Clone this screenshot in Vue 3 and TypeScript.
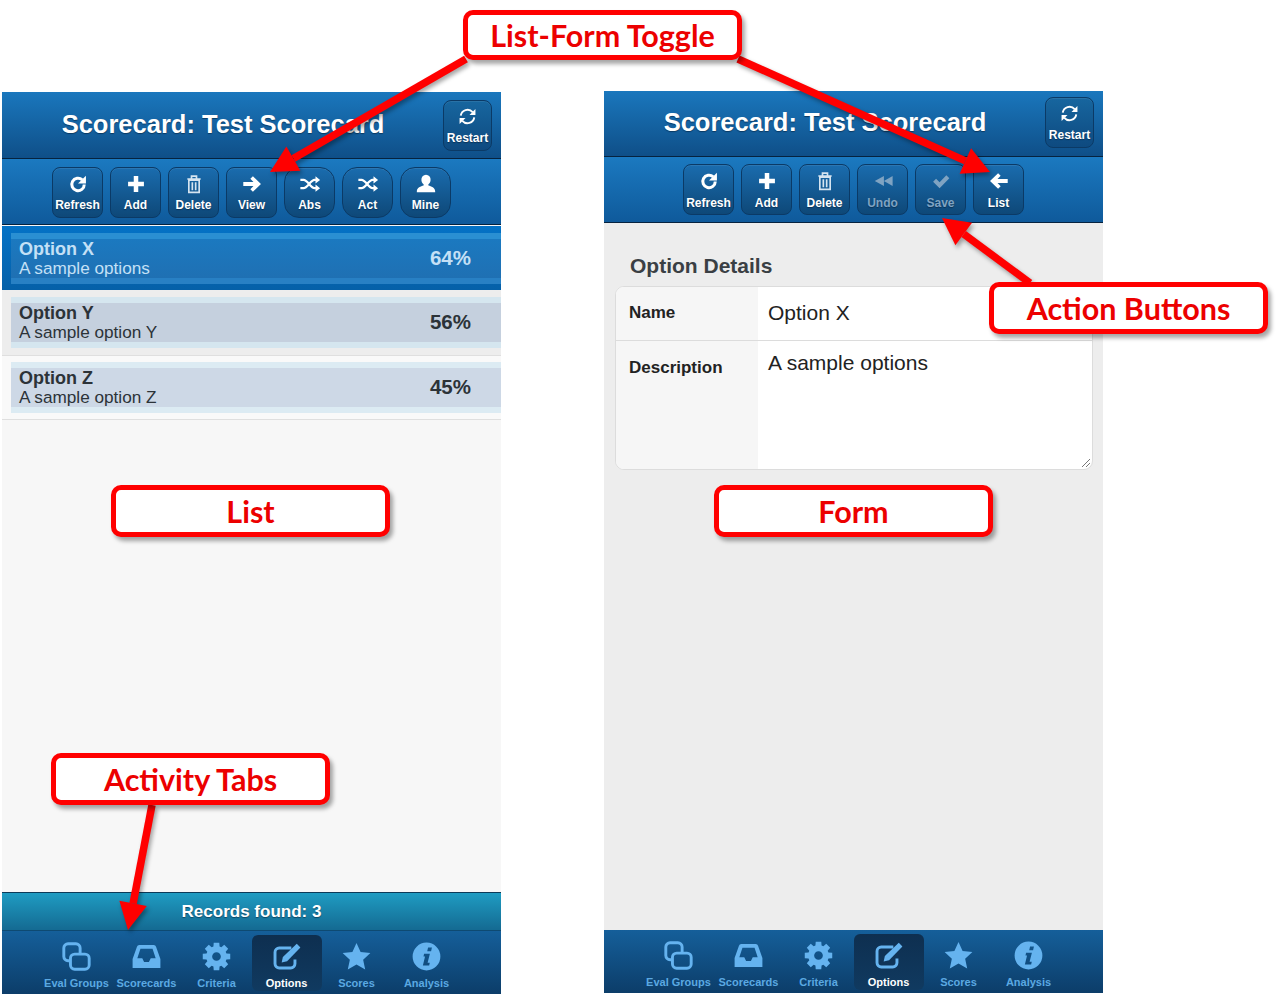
<script setup lang="ts">
interface Shape {
  d: string;
  line?: boolean;
}

interface Btn {
  label: string;
  icon: string;
  round?: boolean;
  off?: boolean;
}

interface Row {
  title: string;
  sub: string;
  score: string;
  kind: string;
}

// 8 tooth cog, easier to generate than to write out by hand
function cogPath(): string {
  const pts: string[] = [];
  for (let i = 0; i < 8; i++) {
    const a = (i * Math.PI) / 4;
    for (const [off, r] of [[-0.3, 8.6], [-0.2, 11.6], [0.2, 11.6], [0.3, 8.6]]) {
      const x = 12 + r * Math.sin(a + off);
      const y = 12 - r * Math.cos(a + off);
      pts.push(x.toFixed(2) + ' ' + y.toFixed(2));
    }
  }
  return 'M' + pts.join('L') + 'zM12 8.4a3.6 3.6 0 1 0 0 7.2a3.6 3.6 0 1 0 0-7.2z';
}

const icons: Record<string, Shape[]> = {
  refresh: [{ d: 'M19.5 12.5a7.5 7.5 0 1 1-2.4-5.5', line: true }, { d: 'M21.5 2v9.5H12z' }],
  restart: [
    { d: 'M3.5 11a8.6 8.6 0 0 1 15-4.5', line: true },
    { d: 'M22 2.5V10h-7.5z' },
    { d: 'M20.5 13a8.6 8.6 0 0 1-15 4.5', line: true },
    { d: 'M2 21.5V14h7.5z' },
  ],
  plus: [{ d: 'M9.3 2.5h5.4v6.8h6.8v5.4h-6.8v6.8H9.3v-6.8H2.5V9.3h6.8z' }],
  trash: [
    { d: 'M5.8 7.5h12.4V22H5.8zM10 10v9.5M14 10v9.5M4 6h16M9 5.5v-3h6v3', line: true },
  ],
  right: [{ d: 'M13 3.5l8.8 8.5-8.8 8.5-2.8-2.8 3.4-3.4H2.5V9.7h11.1l-3.4-3.4z' }],
  left: [{ d: 'M11 3.5L2.2 12l8.8 8.5 2.8-2.8-3.4-3.4h11.1V9.7H10.4l3.4-3.4z' }],
  shuffle: [
    { d: 'M1.5 7.5H5c4.5 0 7.5 9 12 9h1.5M1.5 16.5H5c4.5 0 7.5-9 12-9h1.5', line: true },
    { d: 'M18 3.5l5 4-5 4zM18 12.5l5 4-5 4z' },
  ],
  user: [
    { d: 'M12 2a5 5 0 0 1 5 5.5c0 2-1 3.7-2.4 4.8v1.2c3 1 7.4 2 7.4 6.5v1H2v-1c0-4.5 4.4-5.5 7.4-6.5v-1.2C8 11.2 7 9.5 7 7.5A5 5 0 0 1 12 2z' },
  ],
  undo: [{ d: 'M22.5 6.5v11L13 12zM13 6.5v11L3 12z' }],
  check: [{ d: 'M2.5 13l3.6-3.6 4.2 4.2L18.4 5 22 8.6 10.3 20.8z' }],
  copy: [
    { d: 'M6.5 15.5H5A3.5 3.5 0 0 1 1.5 12V5A3.5 3.5 0 0 1 5 1.5h6.5A3.5 3.5 0 0 1 15 5v4.500', line: true },
    { d: 'M10.5 10H19a3.5 3.5 0 0 1 3.5 3.5V19a3.5 3.5 0 0 1-3.5 3.5h-8.500A3.5 3.5 0 0 1 7 19v-5.500A3.5 3.5 0 0 1 10.500 10z', line: true },
  ],
  inbox: [
    { d: 'M6 2.5h12a2 2 0 0 1 1.9 1.4L23.5 14v7.5H.5V14L4.1 3.9A2 2 0 0 1 6 2.5zM7 5.5L4.4 13.5h4.1l1.5 3h4l1.5-3h4.1L17 5.5z' },
  ],
  cog: [{ d: cogPath() }],
  edit: [
    { d: 'M19 14.5V18a3.5 3.5 0 0 1-3.5 3.5H6A3.5 3.5 0 0 1 2.5 18V8.5A3.5 3.5 0 0 1 6 5h10', line: true },
    { d: 'M20.5 1.5l3 3-11 11.5-4.5 1 1-4.5z' },
  ],
  star: [{ d: 'M12 .8l3.4 7.5 8.1.9-6 5.5 1.7 8L12 18.7l-7.2 4 1.7-8-6-5.5 8.1-.9z' }],
  info: [
    { d: 'M12 .5a11.5 11.5 0 1 0 0 23a11.5 11.5 0 1 0 0-23zM13.3 4.5h3.2l-.7 3.2h-3.2zM10 9.8h4.8l-1.9 7.4h1.8l-.5 2.3H9l1.8-7.4H9.5z' },
  ],
};

const tabs = [
  { label: 'Eval Groups', icon: 'copy' },
  { label: 'Scorecards', icon: 'inbox' },
  { label: 'Criteria', icon: 'cog' },
  { label: 'Options', icon: 'edit', active: true },
  { label: 'Scores', icon: 'star' },
  { label: 'Analysis', icon: 'info' },
];

const listButtons: Btn[] = [
  { label: 'Refresh', icon: 'refresh' },
  { label: 'Add', icon: 'plus' },
  { label: 'Delete', icon: 'trash' },
  { label: 'View', icon: 'right' },
  { label: 'Abs', icon: 'shuffle', round: true },
  { label: 'Act', icon: 'shuffle', round: true },
  { label: 'Mine', icon: 'user', round: true },
];

const formButtons: Btn[] = [
  { label: 'Refresh', icon: 'refresh' },
  { label: 'Add', icon: 'plus' },
  { label: 'Delete', icon: 'trash' },
  { label: 'Undo', icon: 'undo', off: true },
  { label: 'Save', icon: 'check', off: true },
  { label: 'List', icon: 'left' },
];

const phones = [
  { id: 'list', buttons: listButtons },
  { id: 'form', buttons: formButtons },
];

const rows: Row[] = [
  { title: 'Option X', sub: 'A sample options', score: '64%', kind: 'picked' },
  { title: 'Option Y', sub: 'A sample option Y', score: '56%', kind: 'even' },
  { title: 'Option Z', sub: 'A sample option Z', score: '45%', kind: 'odd' },
];

const callouts = [
  { text: 'List-Form Toggle', x: 463, y: 10, h: 50 },
  { text: 'List', x: 111, y: 485, h: 52 },
  { text: 'Form', x: 714, y: 485, h: 52 },
  { text: 'Activity Tabs', x: 51, y: 753, h: 52 },
  { text: 'Action Buttons', x: 989, y: 282, h: 52 },
];

// shaft end + head polygon for an annotation arrow
function arrow(x1: number, y1: number, x2: number, y2: number) {
  const len = Math.hypot(x2 - x1, y2 - y1);
  const ux = (x2 - x1) / len;
  const uy = (y2 - y1) / len;
  const bx = x2 - ux * 27;
  const by = y2 - uy * 27;
  const px = -uy * 14;
  const py = ux * 14;
  return {
    x1,
    y1,
    x2: bx,
    y2: by,
    head: `${x2},${y2} ${bx + px},${by + py} ${bx - px},${by - py}`,
  };
}

const arrows = [
  arrow(466, 59, 270, 172),
  arrow(738, 59, 990, 172),
  arrow(1030, 283, 942, 218),
  arrow(152, 805, 128, 930),
];
</script>

<template>
  <div class="page">
    <section v-for="p in phones" :key="p.id" class="phone" :class="p.id">
      <header class="title-bar">
        <h1>Scorecard: Test Scorecard</h1>
        <button class="btn restart">
          <svg class="icon" viewBox="0 0 24 24">
            <path v-for="(s, i) in icons.restart" :key="i" :d="s.d" :class="s.line ? 'line' : 'solid'" />
          </svg>
          <span>Restart</span>
        </button>
      </header>
      <nav class="toolbar">
        <button v-for="b in p.buttons" :key="b.label" class="btn" :class="{ round: b.round, off: b.off }">
          <svg class="icon" :class="b.icon" viewBox="0 0 24 24">
            <path v-for="(s, i) in icons[b.icon]" :key="i" :d="s.d" :class="s.line ? 'line' : 'solid'" />
          </svg>
          <span>{{ b.label }}</span>
        </button>
      </nav>

      <main v-if="p.id === 'list'" class="content">
        <div v-for="r in rows" :key="r.title" class="row" :class="r.kind">
          <div class="band">
            <div class="row-text">
              <strong>{{ r.title }}</strong>
              <span>{{ r.sub }}</span>
            </div>
            <b class="score">{{ r.score }}</b>
          </div>
        </div>
      </main>
      <main v-else class="content details">
        <h2>Option Details</h2>
        <div class="card">
          <div class="field name">
            <label>Name</label>
            <div class="value">Option X</div>
          </div>
          <div class="field desc">
            <label>Description</label>
            <div class="value">
              A sample options
              <svg class="grip" viewBox="0 0 10 10">
                <path d="M1 9l8-8M5 9l4-4" />
              </svg>
            </div>
          </div>
        </div>
      </main>

      <div v-if="p.id === 'list'" class="status">Records found: 3</div>
      <footer class="tabs">
        <div v-for="t in tabs" :key="t.label" class="tab" :class="{ active: t.active }">
          <svg class="tab-icon" viewBox="0 0 24 24">
            <path v-for="(s, i) in icons[t.icon]" :key="i" :d="s.d" :class="s.line ? 'line' : 'solid'" />
          </svg>
          <span>{{ t.label }}</span>
        </div>
      </footer>
    </section>

    <!-- annotations drawn over the two screens -->
    <svg class="arrows" viewBox="0 0 1282 995">
      <g v-for="(a, i) in arrows" :key="i">
        <line :x1="a.x1" :y1="a.y1" :x2="a.x2" :y2="a.y2" />
        <polygon :points="a.head" />
      </g>
    </svg>
    <div
      v-for="c in callouts"
      :key="c.text"
      class="callout"
      :style="{ left: c.x + 'px', top: c.y + 'px', height: c.h + 'px' }"
    >
      {{ c.text }}
    </div>
  </div>
</template>

<style>
html,
body {
  margin: 0;
  background: #fff;
}
</style>

<style scoped>
.page {
  position: relative;
  width: 1282px;
  height: 995px;
  overflow: hidden;
  display: flex;
  gap: 103px;
  padding: 91px 0 0 2px;
  box-sizing: border-box;
  background: #fff;
  font-family: 'Liberation Sans', Arial, sans-serif;
}
.phone {
  width: 499px;
  height: 902px;
  display: flex;
  flex-direction: column;
}
.phone.list {
  margin-top: 1px;
}
.title-bar {
  height: 66px;
  flex: none;
  box-sizing: border-box;
  display: flex;
  align-items: center;
  position: relative;
  background: linear-gradient(#1a77bd, #0f4f88);
  border-bottom: 1px solid #06233f;
}
.list .title-bar {
  height: 67px;
}
.title-bar h1 {
  margin: -2px 0 0;
  width: 442px;
  text-align: center;
  font-size: 25.5px;
  font-weight: 700;
  color: #fff;
  text-shadow: 0 1px 1px #0b3a63;
}
.list .title-bar h1 {
  margin-top: -1px;
}
.toolbar {
  height: 66px;
  flex: none;
  box-sizing: border-box;
  display: flex;
  justify-content: center;
  align-items: flex-start;
  gap: 7px;
  padding-top: 7px;
  background: linear-gradient(#1b79c0, #0f5a9b);
  border-bottom: 1px solid #06233f;
}
.list .toolbar {
  padding-top: 8px;
}
.btn {
  width: 51px;
  height: 51px;
  padding: 0;
  box-sizing: border-box;
  display: flex;
  flex-direction: column;
  align-items: center;
  color: #fff;
  font-family: inherit;
  font-size: 12px;
  font-weight: 700;
  background: linear-gradient(#1a6cae, #0e4878);
  border: 1px solid #0b3a66;
  border-radius: 8px;
  box-shadow: inset 0 1px 0 rgba(255, 255, 255, 0.08);
  text-shadow: 0 1px 1px #0a3358;
}
.btn.round {
  border-radius: 15px;
}
.btn.off {
  color: #7fa3c2;
}
.btn.off .icon {
  color: #7fa3c2;
}
.btn .icon {
  width: 20px;
  height: 20px;
  margin: 6px 0 4px;
  color: #fff;
}
.btn .icon.right,
.btn .icon.left,
.btn .icon.undo,
.btn .icon.shuffle,
.btn .icon.user {
  width: 22px;
  height: 22px;
  margin: 5px 0 3px;
}
.form .toolbar .btn span {
  margin-top: 1px;
}
.btn .icon.trash {
  color: #d5e4f0;
}
.restart {
  height: 51px;
  position: absolute;
  right: 9px;
  top: 8px;
  width: 49px;
  background: linear-gradient(#17669f, #0e4a80);
}
.form .restart {
  top: 6px;
}
.btn.restart .icon {
  width: 19px;
  height: 19px;
  margin: 6px 0 5px;
}
.solid {
  fill: currentColor;
  fill-rule: evenodd;
}
.line {
  fill: none;
  stroke: currentColor;
  stroke-width: 3.6;
}
.restart .line {
  stroke-width: 2.4;
}
.shuffle .line {
  stroke-width: 2.4;
}
.trash .line {
  stroke-width: 2;
}
.content {
  flex: 1;
  min-height: 0;
  background: #f7f7f7;
}
.row {
  box-sizing: border-box;
  padding-left: 9px;
  display: flex;
  align-items: center;
  border-bottom: 1px solid #dfdfdf;
}
.row.picked {
  height: 64px;
  margin-top: 1px;
  background: linear-gradient(#0472c6, #0560a8);
  border-bottom: 0;
}
.row.even {
  height: 66px;
  background: #ededed;
}
.row.odd {
  height: 64px;
  background: #f9f9f9;
}
.band {
  flex: 1;
  height: 51px;
  box-sizing: border-box;
  display: flex;
  align-items: center;
  justify-content: space-between;
  padding: 0 30px 0 8px;
  border-top: 6px solid #d5e6ef;
  border-bottom: 6px solid #d5e6ef;
  background: #c5d0de;
  color: #2c3338;
}
.row.odd .band {
  background: #cdd8e6;
  border-color: #dcebf3;
}
.row.picked .band {
  background: linear-gradient(#1b79c0, #1f70b3);
  border-color: #2a8fd2 #2a8fd2 #2880c4;
  color: #c4e0f6;
}
.row-text {
  display: flex;
  flex-direction: column;
  margin-top: 1px;
}
.row-text strong {
  font-size: 18px;
  line-height: 19px;
}
.row-text span {
  font-size: 17.2px;
  line-height: 19px;
}
.score {
  font-size: 20.5px;
  margin-top: -1px;
}
.row.picked .score {
  margin-top: 0;
}
.details {
  background: #ededed;
  padding: 30px 11px 0;
}
.details h2 {
  margin: 0 0 7px 15px;
  font-size: 21px;
  line-height: 26px;
  color: #3a3f44;
}
.card {
  width: 478px;
  height: 184px;
  box-sizing: border-box;
  border: 1px solid #dcdcdc;
  border-radius: 9px;
  overflow: hidden;
  background: #fff;
  display: flex;
  flex-direction: column;
}
.field {
  display: flex;
}
.field.name {
  height: 54px;
  border-bottom: 1px solid #dcdcdc;
  box-sizing: border-box;
}
.field.desc {
  flex: 1;
}
.field label {
  width: 142px;
  box-sizing: border-box;
  padding-left: 13px;
  background: #f6f6f6;
  font-size: 17px;
  font-weight: 700;
  color: #222;
}
.field.name label {
  line-height: 52px;
}
.field.desc label {
  padding-top: 17px;
}
.value {
  position: relative;
  flex: 1;
  padding-left: 10px;
  font-size: 21px;
  color: #222;
}
.field.name .value {
  line-height: 52px;
}
.field.desc .value {
  padding-top: 8px;
  line-height: 27px;
}
.grip {
  position: absolute;
  right: 1px;
  bottom: 1px;
  width: 10px;
  height: 10px;
  fill: none;
  stroke: #777;
  stroke-width: 1;
}
.status {
  height: 39px;
  flex: none;
  box-sizing: border-box;
  display: flex;
  align-items: center;
  justify-content: center;
  background: linear-gradient(#1f9cc2, #146a92);
  border-top: 1px solid #0c3a58;
  border-bottom: 1px solid #0e4a72;
  color: #fff;
  font-size: 17px;
  font-weight: 700;
  text-shadow: 0 1px 1px #0d4865;
}
.tabs {
  height: 63px;
  flex: none;
  box-sizing: border-box;
  display: flex;
  justify-content: center;
  padding-top: 4px;
  background: linear-gradient(#155f9a, #0c3d69);
}
.tab {
  width: 70px;
  height: 56px;
  display: flex;
  flex-direction: column;
  align-items: center;
  border-radius: 6px;
  color: #5ba9e2;
  font-size: 11px;
  font-weight: 700;
  white-space: nowrap;
}
.tab.active {
  background: linear-gradient(#0e2f50, #103a60);
  color: #fff;
}
.tab-icon {
  width: 29px;
  height: 29px;
  margin: 7px 0 6px;
  color: #65b3ef;
}
.tab-icon .line {
  stroke-width: 2.4;
}
.arrows {
  position: absolute;
  left: 0;
  top: 0;
  width: 1282px;
  height: 995px;
  pointer-events: none;
  filter: drop-shadow(2px 3px 2px rgba(0, 0, 0, 0.35));
}
.arrows line {
  stroke: #f00;
  stroke-width: 7.5;
}
.arrows polygon {
  fill: #f00;
}
.callout {
  position: absolute;
  width: 279px;
  box-sizing: border-box;
  display: flex;
  align-items: center;
  justify-content: center;
  background: #fff;
  border: 5px solid #f00;
  border-radius: 10px;
  box-shadow: 3px 4px 4px rgba(0, 0, 0, 0.35);
  color: #ec0000;
  font-family: Lato, 'Liberation Sans', sans-serif;
  font-size: 30.5px;
  font-weight: 700;
}
</style>
